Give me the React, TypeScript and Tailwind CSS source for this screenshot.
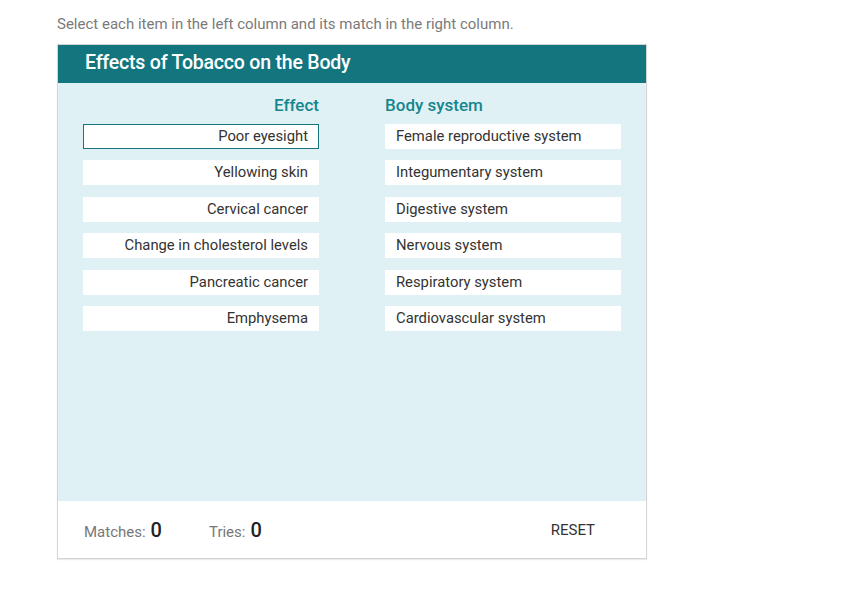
import React, { useState } from 'react';

const effects = [
  'Poor eyesight',
  'Yellowing skin',
  'Cervical cancer',
  'Change in cholesterol levels',
  'Pancreatic cancer',
  'Emphysema',
];

const systems = [
  'Female reproductive system',
  'Integumentary system',
  'Digestive system',
  'Nervous system',
  'Respiratory system',
  'Cardiovascular system',
];

export default function App() {
  const [selected, setSelected] = useState<number | null>(0);

  return (
    <div className="min-h-screen bg-white px-[57px] pt-[14px] font-['Roboto',sans-serif]">
      <p className="text-[15px] leading-[20px] text-[#7a7a7a]">
        Select each item in the left column and its match in the right column.
      </p>

      <div className="mt-[10px] w-[590px] border border-[#d4d4d4] shadow-[0_1px_1px_rgba(0,0,0,0.08)]">
        <div className="flex h-[38px] items-center bg-[#13767f] px-[27px]">
          <h2 className="mt-[-3px] text-[19.5px] font-medium tracking-[-0.2px] text-white">
            Effects of Tobacco on the Body
          </h2>
        </div>

        <div className="flex h-[418px] gap-[66px] bg-[#e0f1f5] px-[25px] pt-[12px]">
          <div className="flex w-[236px] flex-col">
            <div className="text-right text-[17px] font-medium leading-[21px] text-[#15868d]">
              Effect
            </div>
            <div className="mt-[8px] flex flex-col gap-[11.4px]">
              {effects.map((e, i) => (
                <button
                  key={e}
                  onClick={() => setSelected(i)}
                  className={`h-[25px] border bg-white px-[10px] text-right text-[14.8px] leading-[23px] text-[#333] ${
                    selected === i ? 'border-[#13767f]' : 'border-white'
                  }`}
                >
                  {e}
                </button>
              ))}
            </div>
          </div>

          <div className="flex w-[236px] flex-col">
            <div className="text-left text-[17px] font-medium leading-[21px] text-[#15868d]">
              Body system
            </div>
            <div className="mt-[8px] flex flex-col gap-[11.4px]">
              {systems.map((s) => (
                <button
                  key={s}
                  className="h-[25px] border border-white bg-white px-[10px] text-left text-[14.8px] leading-[23px] text-[#333]"
                >
                  {s}
                </button>
              ))}
            </div>
          </div>
        </div>

        <div className="flex h-[57px] items-center bg-white pl-[26px] pr-[51px]">
          <div className="flex items-baseline text-[15px] text-[#777]">
            Matches:
            <span className="ml-[5px] text-[20px] font-medium text-[#222]">0</span>
          </div>
          <div className="ml-[47px] flex items-baseline text-[15px] text-[#777]">
            Tries:
            <span className="ml-[5px] text-[20px] font-medium text-[#222]">0</span>
          </div>
          <button className="ml-auto mt-[2px] text-[15px] text-[#333]">RESET</button>
        </div>
      </div>
    </div>
  );
}
